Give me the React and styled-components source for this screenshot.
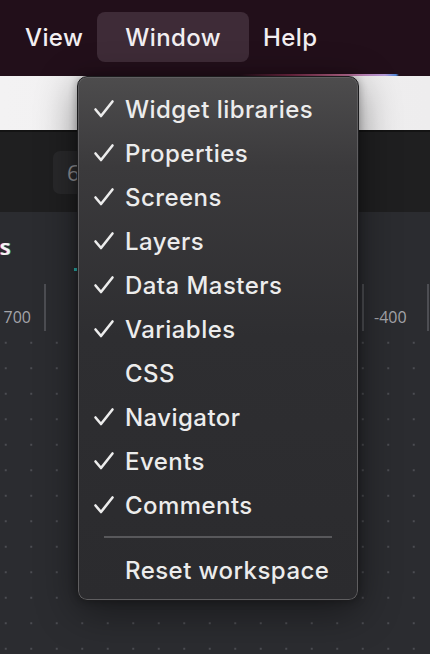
import React from 'react'
import styled, { createGlobalStyle } from 'styled-components'

const GlobalStyle = createGlobalStyle`
  html, body {
    margin: 0;
    padding: 0;
    background: #2b2c30;
    overflow: hidden;
  }
  body {
    font-family: Inter, "Noto Sans", sans-serif;
  }
`

const windowItems = [
  { id: 'widgets', label: 'Widget libraries', checked: true },
  { id: 'properties', label: 'Properties', checked: true },
  { id: 'screens', label: 'Screens', checked: true },
  { id: 'layers', label: 'Layers', checked: true },
  { id: 'data', label: 'Data Masters', checked: true },
  { id: 'variables', label: 'Variables', checked: true },
  { id: 'css', label: 'CSS', checked: false },
  { id: 'navigator', label: 'Navigator', checked: true },
  { id: 'events', label: 'Events', checked: true },
  { id: 'comments', label: 'Comments', checked: true }
]

const App = () => {
  return (
    <>
      <GlobalStyle />
      <Page>
        <MenuBar>
          <MenuTitle>View</MenuTitle>
          <MenuTitle active>Window</MenuTitle>
          <MenuTitle>Help</MenuTitle>
        </MenuBar>
        <GlowLine />
        <AddressStrip />
        <Toolbar>
          <ZoomInput>60%</ZoomInput>
        </Toolbar>
        <Canvas>
          <TabRow>
            <TabLabel>Screens</TabLabel>
            <Marker />
          </TabRow>
          <Ruler>
            <RulerLabel align='right'>700</RulerLabel>
            <Tick />
            <span />
            <Tick />
            <RulerLabel>-400</RulerLabel>
            <Tick />
          </Ruler>
          <DotGrid />
        </Canvas>

        <Dropdown>
          {windowItems.map((item) => (
            <Item key={item.id}>
              <CheckSlot>
                {item.checked && <CheckIcon />}
              </CheckSlot>
              {item.label}
            </Item>
          ))}
          <Separator />
          <Item>
            <CheckSlot />
            Reset workspace
          </Item>
        </Dropdown>
      </Page>
    </>
  )
}

const CheckIcon = () => (
  <svg width='22' height='20' viewBox='0 0 22 20'>
    <polyline
      points='2.5,10.5 8,17 19.5,2.5'
      fill='none'
      stroke='#ececec'
      strokeWidth='2.6'
      strokeLinecap='round'
      strokeLinejoin='round'
    />
  </svg>
)

const Page = styled.div`
  position: relative;
  width: 430px;
  height: 654px;
  display: flex;
  flex-direction: column;
  overflow: hidden;
`

const MenuBar = styled.div`
  height: 74px;
  flex-shrink: 0;
  background: #220f1a;
  display: flex;
  align-items: center;
  padding-left: 11px;
`

const MenuTitle = styled.div`
  height: 50px;
  display: flex;
  align-items: center;
  padding: 0 ${(p) => (p.active ? '28px' : '14px')};
  border-radius: 8px;
  background: ${(p) => (p.active ? '#3e2b37' : 'transparent')};
  color: #f2eef1;
  font-size: 24px;
  font-weight: 500;
  letter-spacing: 0.4px;
`

const GlowLine = styled.div`
  height: 2px;
  flex-shrink: 0;
  background: linear-gradient(
    90deg,
    #220f1a 0,
    #220f1a 240px,
    #7a2a48 290px,
    #c46b92 340px,
    #b69ad8 385px,
    #4f86d6 396px,
    #220f1a 399px
  );
`

const AddressStrip = styled.div`
  height: 54px;
  flex-shrink: 0;
  background: linear-gradient(90deg, #f3f2f3, #eeedee);
  border-bottom: 2px solid #141414;
`

const Toolbar = styled.div`
  height: 80px;
  flex-shrink: 0;
  background: #1f1f20;
  display: flex;
  align-items: center;
  padding-left: 53px;
`

const ZoomInput = styled.div`
  width: 90px;
  height: 43px;
  border-radius: 7px;
  background: #29292b;
  color: #8e8e92;
  font-family: "Open Sans", sans-serif;
  font-size: 22px;
  display: flex;
  align-items: center;
  padding-left: 14px;
  box-sizing: border-box;
`

const Canvas = styled.div`
  flex: 1;
  background: #2b2c30;
  display: flex;
  flex-direction: column;
`

const TabRow = styled.div`
  height: 58px;
  display: flex;
  align-items: flex-start;
  padding-top: 22px;
  box-sizing: border-box;
`

const TabLabel = styled.span`
  margin-left: -72px;
  font-family: "Open Sans", sans-serif;
  font-size: 22px;
  font-weight: 600;
  line-height: 24px;
  color: #f4f4f6;
  text-shadow: -1px 0 0 #e0454c, 1px 0 0 #3fc7d0;
`

const Marker = styled.span`
  width: 3px;
  height: 3px;
  margin: 34px 0 0 63px;
  background: #2bb5b2;
`

const Ruler = styled.div`
  height: 64px;
  display: grid;
  grid-template-columns: 44px 2px 316px 2px 63px 2px;
  align-items: end;
  padding-bottom: 3px;
  box-sizing: border-box;
`

const RulerLabel = styled.span`
  font-family: "Open Sans", sans-serif;
  font-size: 16px;
  color: #a4a5aa;
  line-height: 20px;
  padding-bottom: 4px;
  text-align: ${(p) => p.align || 'left'};
  padding-right: ${(p) => (p.align === 'right' ? '13px' : '0')};
  padding-left: ${(p) => (p.align === 'right' ? '0' : '10px')};
  white-space: nowrap;
`

const Tick = styled.span`
  width: 2px;
  height: 47px;
  background: #4d4e53;
`

const DotGrid = styled.div`
  flex: 1;
  background-image: radial-gradient(circle, #4c4d52 0.8px, transparent 1.1px);
  background-size: 25.5px 25.5px;
  background-position: -7px -4px;
`

const Dropdown = styled.div`
  position: absolute;
  left: 77px;
  top: 76px;
  width: 282px;
  height: 525px;
  box-sizing: border-box;
  padding: 10px 0 0;
  border-radius: 10px;
  background: linear-gradient(180deg, #4d4c4d 0, #3b3a3c 90px, #2e2e31 260px, #2b2b2e 100%);
  border: 1px solid #1c1c1e;
  box-shadow:
    inset 0 0 0 1px #5f5e60,
    0 10px 40px rgba(0, 0, 0, 0.45),
    0 0 8px rgba(0, 0, 0, 0.3);
  display: flex;
  flex-direction: column;
`

const Item = styled.div`
  height: 44px;
  display: flex;
  align-items: center;
  color: #ececec;
  font-size: 24px;
  font-weight: 500;
  letter-spacing: 0.45px;
`

const CheckSlot = styled.span`
  width: 47px;
  padding-left: 15px;
  box-sizing: border-box;
  display: flex;
  align-items: center;
`

const Separator = styled.div`
  height: 2px;
  margin: 9px 26px 10px;
  background: #58585b;
`

export default App
